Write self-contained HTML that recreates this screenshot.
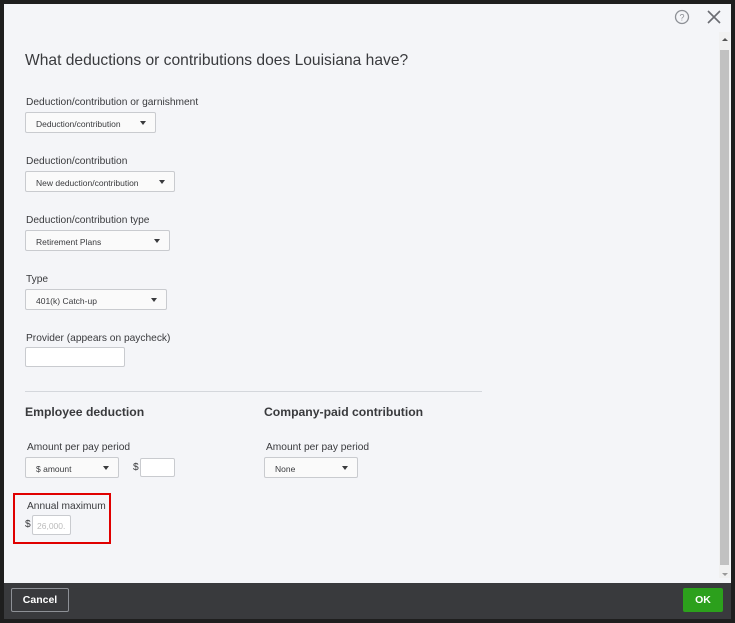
<!DOCTYPE html>
<html><head><style>
*{margin:0;padding:0;box-sizing:border-box}
body{width:735px;height:623px;background:#1e1e1e;font-family:"Liberation Sans",sans-serif;position:relative;overflow:hidden}
.m{position:absolute;left:4px;top:4px;width:727px;height:579px;background:#f4f5f8}
.ft{position:absolute;left:4px;top:583px;width:727px;height:36px;background:#393a3d}
.t{position:absolute;color:#393a3d;font-size:10.2px}
.h1{position:absolute;left:25px;top:52px;font-size:15.6px;color:#393a3d}
.sel{position:absolute;height:21px;border:1px solid #c9cbcf;background:#fafafa;border-radius:2px;font-size:8.5px;color:#393a3d;padding:6px 10px}
.sel:after{content:"";position:absolute;right:9px;top:8px;border-left:3px solid transparent;border-right:3px solid transparent;border-top:4px solid #393a3d}
.inp{position:absolute;background:#fff;border:1px solid #c9cbcf;border-radius:2px}
.h2{position:absolute;font-size:12.2px;font-weight:bold;color:#393a3d}
</style></head><body>
<div class="m"></div>
<svg style="position:absolute;left:674px;top:9px" width="16" height="16"><circle cx="8" cy="8" r="6.5" fill="none" stroke="#8d9096" stroke-width="1.3"/><text x="8" y="11.5" font-size="9" text-anchor="middle" fill="#8d9096" font-family="Liberation Sans">?</text></svg>
<svg style="position:absolute;left:706px;top:9px" width="16" height="16"><path d="M2 2L14 14M14 2L2 14" stroke="#6b6c72" stroke-width="1.6"/></svg>
<div style="position:absolute;left:719px;top:32px;width:11px;height:546px;background:#f1f1f1"></div>
<div style="position:absolute;left:720px;top:50px;width:9px;height:515px;background:#c1c1c1"></div>
<div style="position:absolute;left:722px;top:38px;border-left:3px solid transparent;border-right:3px solid transparent;border-bottom:3px solid #555"></div>
<div style="position:absolute;left:722px;top:573px;border-left:3px solid transparent;border-right:3px solid transparent;border-top:3px solid #999"></div>
<div class="h1">What deductions or contributions does Louisiana have?</div>
<div class="t" style="left:26px;top:97px">Deduction/contribution or garnishment</div>
<div class="sel" style="left:25px;top:112px;width:131px">Deduction/contribution</div>
<div class="t" style="left:26px;top:156px">Deduction/contribution</div>
<div class="sel" style="left:25px;top:171px;width:150px">New deduction/contribution</div>
<div class="t" style="left:26px;top:215px">Deduction/contribution type</div>
<div class="sel" style="left:25px;top:230px;width:145px">Retirement Plans</div>
<div class="t" style="left:26px;top:274px">Type</div>
<div class="sel" style="left:25px;top:289px;width:142px">401(k) Catch-up</div>
<div class="t" style="left:26px;top:333px">Provider (appears on paycheck)</div>
<div class="inp" style="left:25px;top:347px;width:100px;height:20px"></div>
<div style="position:absolute;left:25px;top:391px;width:457px;height:1px;background:#d4d7dc"></div>
<div class="h2" style="left:25px;top:405px">Employee deduction</div>
<div class="h2" style="left:264px;top:405px">Company-paid contribution</div>
<div class="t" style="left:27px;top:442px">Amount per pay period</div>
<div class="sel" style="left:25px;top:457px;width:94px">$ amount</div>
<div class="t" style="left:133px;top:462px">$</div>
<div class="inp" style="left:140px;top:458px;width:35px;height:19px"></div>
<div class="t" style="left:266px;top:442px">Amount per pay period</div>
<div class="sel" style="left:264px;top:457px;width:94px">None</div>
<div style="position:absolute;left:13px;top:493px;width:98px;height:51px;border:2px solid #e00000"></div>
<div class="t" style="left:27px;top:501px">Annual maximum</div>
<div class="t" style="left:25px;top:519px">$</div>
<div class="inp" style="left:32px;top:515px;width:39px;height:20px;font-size:8.5px;color:#bbb;padding:5px 4px;overflow:hidden">26,000.</div>
<div class="ft"></div>
<div style="position:absolute;left:11px;top:588px;width:58px;height:24px;border:1px solid #8d9096;border-radius:2px;color:#fff;font-size:10.5px;font-weight:bold;text-align:center;line-height:22px">Cancel</div>
<div style="position:absolute;left:683px;top:588px;width:40px;height:24px;background:#2ca01c;border-radius:2px;color:#fff;font-size:10.5px;font-weight:bold;text-align:center;line-height:24px">OK</div>
</body></html>
